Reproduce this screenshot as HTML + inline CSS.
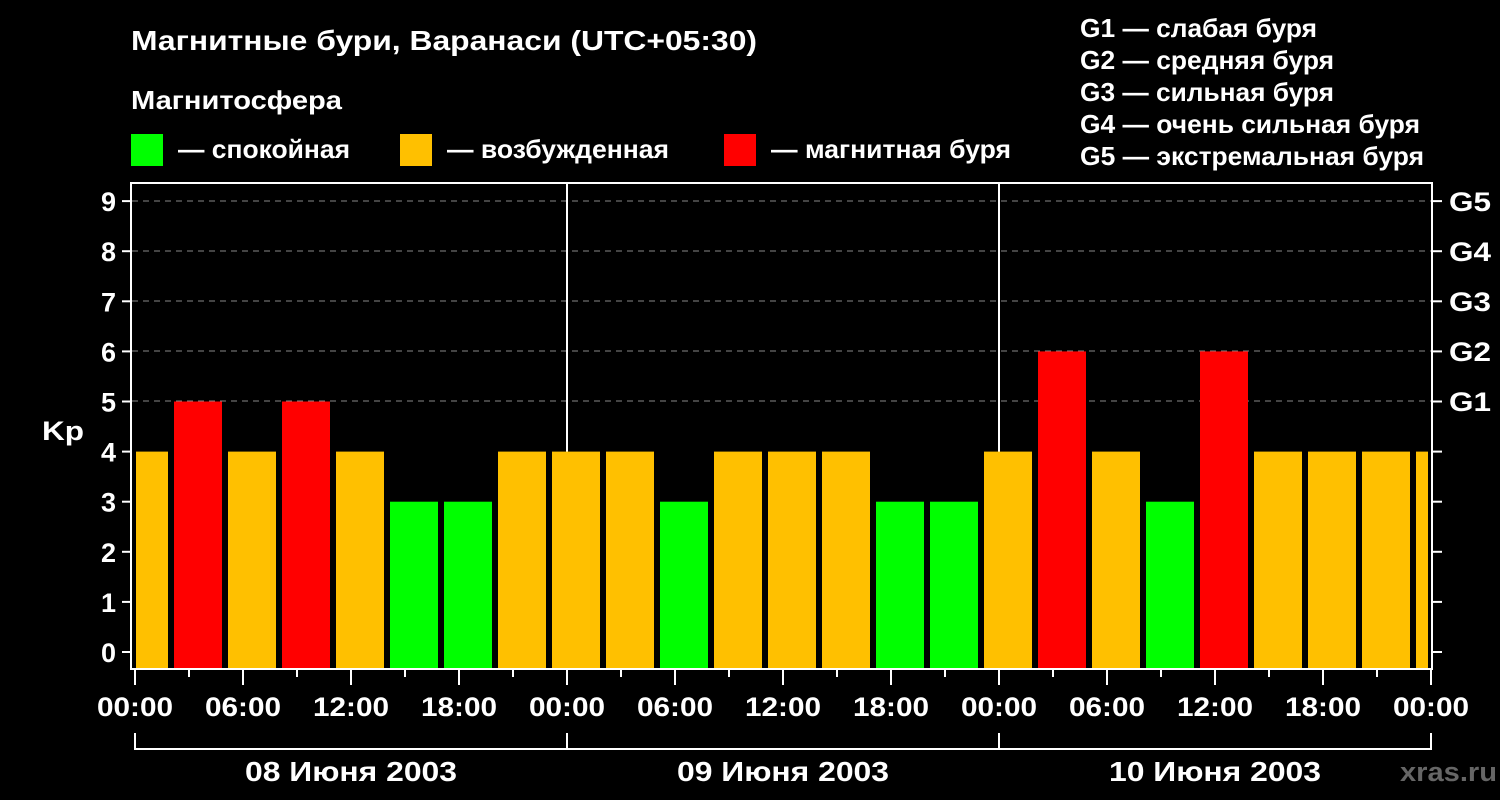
<!DOCTYPE html>
<html><head><meta charset="utf-8"><style>
html,body{margin:0;padding:0;background:#000;}
svg{display:block;}
text{font-family:"Liberation Sans",sans-serif;font-weight:bold;fill:#fff;}
</style></head><body>
<svg width="1500" height="800" viewBox="0 0 1500 800" xmlns="http://www.w3.org/2000/svg">
<rect width="1500" height="800" fill="#000"/>
<text x="131" y="50" font-size="28" textLength="626" lengthAdjust="spacingAndGlyphs">Магнитные бури, Варанаси (UTC+05:30)</text>
<text x="131" y="109" font-size="26" textLength="211" lengthAdjust="spacingAndGlyphs">Магнитосфера</text>
<rect x="131" y="134" width="32" height="32" fill="#00ff00"/>
<text x="178" y="158" font-size="26" textLength="172" lengthAdjust="spacingAndGlyphs">— спокойная</text>
<rect x="400" y="134" width="32" height="32" fill="#ffc000"/>
<text x="447" y="158" font-size="26" textLength="222" lengthAdjust="spacingAndGlyphs">— возбужденная</text>
<rect x="724" y="134" width="32" height="32" fill="#ff0000"/>
<text x="771" y="158" font-size="26" textLength="240" lengthAdjust="spacingAndGlyphs">— магнитная буря</text>
<g font-size="26">
<text x="1080" y="37" textLength="237" lengthAdjust="spacingAndGlyphs">G1 — слабая буря</text>
<text x="1080" y="69" textLength="254" lengthAdjust="spacingAndGlyphs">G2 — средняя буря</text>
<text x="1080" y="101" textLength="254" lengthAdjust="spacingAndGlyphs">G3 — сильная буря</text>
<text x="1080" y="133" textLength="340" lengthAdjust="spacingAndGlyphs">G4 — очень сильная буря</text>
<text x="1080" y="165" textLength="344" lengthAdjust="spacingAndGlyphs">G5 — экстремальная буря</text>
</g>
<g stroke="#888" stroke-width="1" stroke-dasharray="6,5">
<line x1="132" y1="201" x2="1431" y2="201"/>
<line x1="132" y1="251" x2="1431" y2="251"/>
<line x1="132" y1="301" x2="1431" y2="301"/>
<line x1="132" y1="351" x2="1431" y2="351"/>
<line x1="132" y1="401" x2="1431" y2="401"/>
</g>
<g stroke="#fff" stroke-width="2">
<line x1="567" y1="183" x2="567" y2="668"/>
<line x1="999" y1="183" x2="999" y2="668"/>
</g>
<g id="bars"></g>
<g stroke="#fff" stroke-width="2" fill="none">
<path d="M131,669 V183 H1432 V669 Z"/>
</g>
<g stroke="#fff" stroke-width="2" id="ticks"></g>
<g font-size="27" text-anchor="end" id="ylab"></g>
<g font-size="27" id="glab">
<text x="1449" y="211" textLength="42" lengthAdjust="spacingAndGlyphs">G5</text><text x="1449" y="261" textLength="42" lengthAdjust="spacingAndGlyphs">G4</text><text x="1449" y="311" textLength="42" lengthAdjust="spacingAndGlyphs">G3</text><text x="1449" y="361" textLength="42" lengthAdjust="spacingAndGlyphs">G2</text><text x="1449" y="411" textLength="42" lengthAdjust="spacingAndGlyphs">G1</text>
</g>
<text x="42" y="440" font-size="27" textLength="42" lengthAdjust="spacingAndGlyphs">Kp</text>
<g font-size="27" id="xlab"></g>
<path d="M135,733 V749 H1431 V733 M567,733 V749 M999,733 V749" stroke="#fff" stroke-width="2" fill="none"/>
<g font-size="28">
<text x="245" y="781" textLength="212" lengthAdjust="spacingAndGlyphs">08 Июня 2003</text>
<text x="677" y="781" textLength="212" lengthAdjust="spacingAndGlyphs">09 Июня 2003</text>
<text x="1109" y="781" textLength="212" lengthAdjust="spacingAndGlyphs">10 Июня 2003</text>
</g>
<text x="1400" y="781" font-size="27" textLength="97" lengthAdjust="spacingAndGlyphs" style="fill:#666">xras.ru</text>
<script>
var ns="http://www.w3.org/2000/svg";
var vals=[4,5,4,5,4,3,3,4,4,4,3,4,4,4,3,3,4,6,4,3,6,4,4,4,4];
var col={3:"#00ff00",4:"#ffc000",5:"#ff0000",6:"#ff0000"};
var b=document.getElementById("bars");
vals.forEach(function(v,k){var x=120+54*k,x2=x+48;if(x<136)x=136;if(x2>1428)x2=1428;
var r=document.createElementNS(ns,"rect");r.setAttribute("x",x);r.setAttribute("width",x2-x);
var top=652-50.1*v;r.setAttribute("y",top);r.setAttribute("height",668-top);r.setAttribute("fill",col[v]);b.appendChild(r);});
var t=document.getElementById("ticks"),yl=document.getElementById("ylab"),xl=document.getElementById("xlab");
function ln(a,b2,c,d){var l=document.createElementNS(ns,"line");l.setAttribute("x1",a);l.setAttribute("y1",b2);l.setAttribute("x2",c);l.setAttribute("y2",d);t.appendChild(l);}
function tx(g,x,y,s,w){var e=document.createElementNS(ns,"text");e.setAttribute("x",x);e.setAttribute("y",y);if(w){e.setAttribute("textLength",w);e.setAttribute("lengthAdjust","spacingAndGlyphs");}e.textContent=s;g.appendChild(e);}
for(var i=0;i<=9;i++){var y=652-50.1*i;ln(122,y,131,y);ln(1432,y,1442,y);tx(yl,116,y+10,i);}
var labs=["00:00","06:00","12:00","18:00"];
for(var k=0;k<=24;k++){var x=135+54*k;if(k%2==0){ln(x,669,x,685);tx(xl,x-38,716,labs[(k/2)%4],76);}else ln(x,669,x,677);}
</script>
</svg>
</body></html>
